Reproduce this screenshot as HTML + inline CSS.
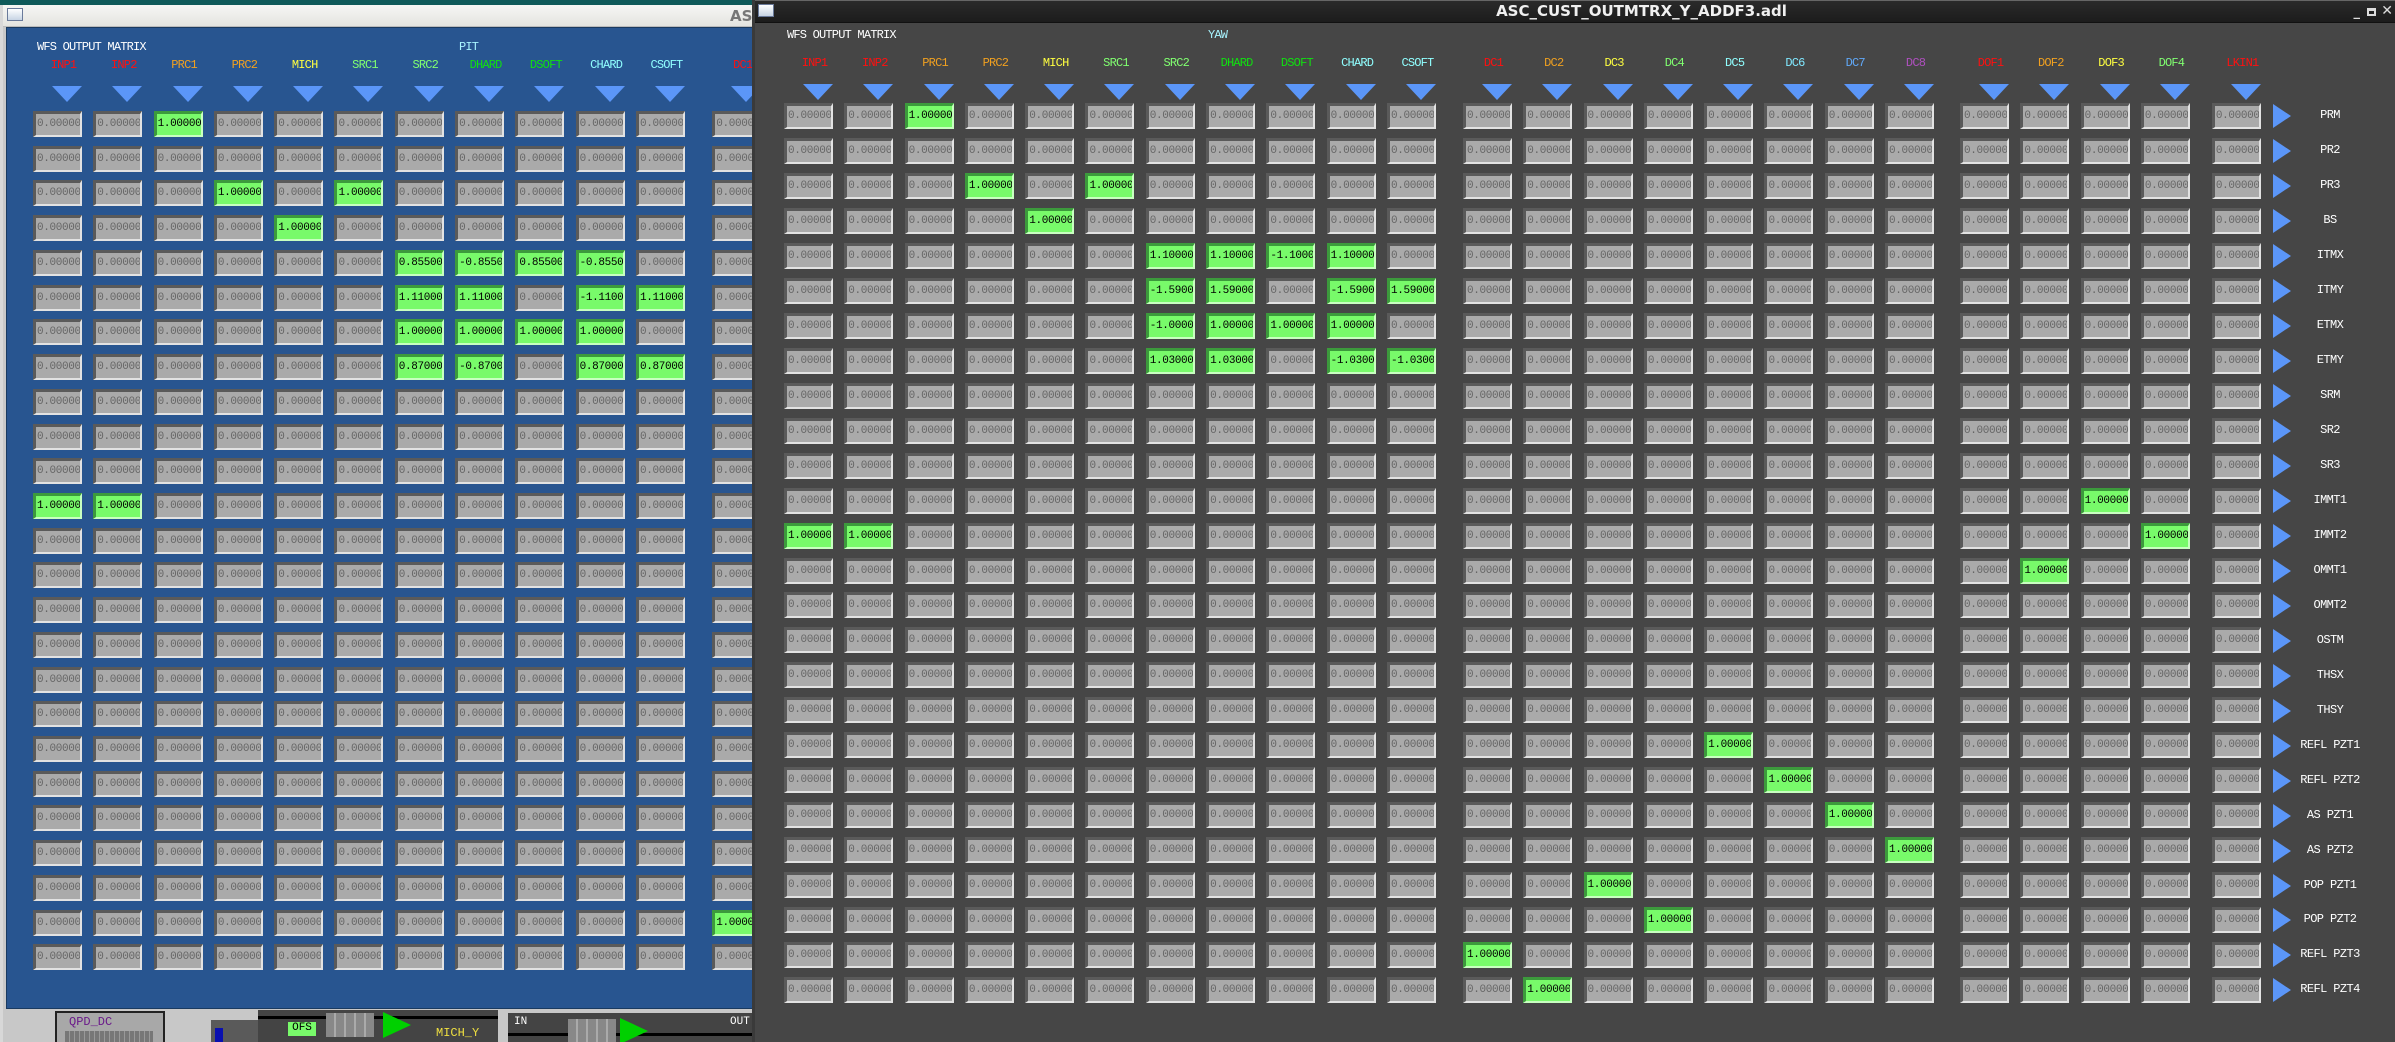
<!DOCTYPE html>
<html><head><meta charset="utf-8"><style>
*{margin:0;padding:0;box-sizing:border-box}
body{width:2395px;height:1042px;overflow:hidden;background:#0f5a5a;position:relative;font-family:"Liberation Mono",monospace}
#L{position:absolute;left:0;top:5px;width:756px;height:1037px;background:#c8c8c8;overflow:hidden;border-left:3px solid #d8d8d8}
#Lt{position:absolute;left:0;top:0;width:756px;height:22px;background:linear-gradient(#f6f6f4,#e4e4e0);border-bottom:1px solid #bbb}
#Lb{position:absolute;left:3px;top:22px;width:752px;height:982px;background:#285590;border:1px solid #1a3a60}
#Rw{position:absolute;left:752px;top:0;width:1643px;height:1042px;background:#464646;border-left:3px solid #3a3a3a}
#Rt{position:absolute;left:0;top:0;width:1643px;height:23px;background:linear-gradient(#2a2a2a,#1c1c1c);border-top:1px solid #666;border-bottom:1px solid #111}
.ic{position:absolute;width:16px;height:13px;background:linear-gradient(#fff,#c8d4e4);border:1px solid #6a7a9a}
.R{position:absolute;display:flex}
.R i,.R b{display:block;width:49px;height:26px;margin-right:11.3px;font-style:normal;font-weight:normal;font-size:11px;letter-spacing:-0.35px;line-height:21px;padding-left:1px;border-top:3px solid #5a5a5a;border-left:3px solid #5a5a5a;border-bottom:2px solid #e2e2e2;border-right:2px solid #e2e2e2;background:#aaa;color:#666;white-space:nowrap;overflow:hidden}
.R b{background:#78fa6a;color:#000;border-top-color:#3c9a3c;border-left-color:#3c9a3c;border-bottom-color:#c8ffc0;border-right-color:#c8ffc0}
.RR>:nth-child(12){margin-left:15.7px}.RR>:nth-child(20){margin-left:14.7px}.RR>:nth-child(24){margin-left:10.7px}
.LR>:nth-child(12){margin-left:16px}
.R u{display:block;width:49px;margin-right:11.3px;text-decoration:none;font-size:12px;letter-spacing:-0.8px;text-align:center;padding-left:12px;white-space:nowrap}
.R u s{display:block;width:0;height:0;border-left:15px solid transparent;border-right:15px solid transparent;border-top:16px solid #5b96f8;margin:14px 0 0 7px}
.t{position:absolute;font-size:12px;letter-spacing:-0.8px;color:#fff;white-space:nowrap}
.ar{position:absolute;left:2273px;width:0;height:0;border-top:12px solid transparent;border-bottom:12px solid transparent;border-left:18px solid #5b96f8}
.lb{position:absolute;left:2280px;width:100px;text-align:center;color:#fff;font-size:12px;letter-spacing:-0.6px}
.r{color:#ff1010}.o{color:#f0a020}.y{color:#ffff40}.lg{color:#80ff70}.g{color:#10e010}.c{color:#90ffff}.c2{color:#80e8ff}.bl{color:#60a8f8}.p{color:#b050c0}
</style></head><body>
<div id="L">
<div id="Lt"><div class="ic" style="left:4px;top:3px"></div><div style="position:absolute;left:727px;top:2px;font:bold 15px 'DejaVu Sans',sans-serif;color:#777">AS</div></div>
<div id="Lb">
<div class="t" style="left:30px;top:12px">WFS OUTPUT MATRIX</div>
<div class="t" style="left:452px;top:12px;color:#a8f4ff">PIT</div>
<div class="R LR" style="left:26px;top:30px">
<u class="r">INP1<s></s></u><u class="r">INP2<s></s></u><u class="o">PRC1<s></s></u><u class="o">PRC2<s></s></u><u class="y">MICH<s></s></u><u class="lg">SRC1<s></s></u><u class="lg">SRC2<s></s></u><u class="g">DHARD<s></s></u><u class="g">DSOFT<s></s></u><u class="c">CHARD<s></s></u><u class="c">CSOFT<s></s></u><u class="r" style="margin-left:16px">DC1<s></s></u></div>
<div class="R LR" style="left:26px;top:83px"><i>0.00000</i><i>0.00000</i><b>1.00000</b><i>0.00000</i><i>0.00000</i><i>0.00000</i><i>0.00000</i><i>0.00000</i><i>0.00000</i><i>0.00000</i><i>0.00000</i><i>0.00000</i></div>
<div class="R LR" style="left:26px;top:117.7px"><i>0.00000</i><i>0.00000</i><i>0.00000</i><i>0.00000</i><i>0.00000</i><i>0.00000</i><i>0.00000</i><i>0.00000</i><i>0.00000</i><i>0.00000</i><i>0.00000</i><i>0.00000</i></div>
<div class="R LR" style="left:26px;top:152.4px"><i>0.00000</i><i>0.00000</i><i>0.00000</i><b>1.00000</b><i>0.00000</i><b>1.00000</b><i>0.00000</i><i>0.00000</i><i>0.00000</i><i>0.00000</i><i>0.00000</i><i>0.00000</i></div>
<div class="R LR" style="left:26px;top:187.2px"><i>0.00000</i><i>0.00000</i><i>0.00000</i><i>0.00000</i><b>1.00000</b><i>0.00000</i><i>0.00000</i><i>0.00000</i><i>0.00000</i><i>0.00000</i><i>0.00000</i><i>0.00000</i></div>
<div class="R LR" style="left:26px;top:221.9px"><i>0.00000</i><i>0.00000</i><i>0.00000</i><i>0.00000</i><i>0.00000</i><i>0.00000</i><b>0.85500</b><b>-0.8550</b><b>0.85500</b><b>-0.8550</b><i>0.00000</i><i>0.00000</i></div>
<div class="R LR" style="left:26px;top:256.6px"><i>0.00000</i><i>0.00000</i><i>0.00000</i><i>0.00000</i><i>0.00000</i><i>0.00000</i><b>1.11000</b><b>1.11000</b><i>0.00000</i><b>-1.1100</b><b>1.11000</b><i>0.00000</i></div>
<div class="R LR" style="left:26px;top:291.3px"><i>0.00000</i><i>0.00000</i><i>0.00000</i><i>0.00000</i><i>0.00000</i><i>0.00000</i><b>1.00000</b><b>1.00000</b><b>1.00000</b><b>1.00000</b><i>0.00000</i><i>0.00000</i></div>
<div class="R LR" style="left:26px;top:326px"><i>0.00000</i><i>0.00000</i><i>0.00000</i><i>0.00000</i><i>0.00000</i><i>0.00000</i><b>0.87000</b><b>-0.8700</b><i>0.00000</i><b>0.87000</b><b>0.87000</b><i>0.00000</i></div>
<div class="R LR" style="left:26px;top:360.8px"><i>0.00000</i><i>0.00000</i><i>0.00000</i><i>0.00000</i><i>0.00000</i><i>0.00000</i><i>0.00000</i><i>0.00000</i><i>0.00000</i><i>0.00000</i><i>0.00000</i><i>0.00000</i></div>
<div class="R LR" style="left:26px;top:395.5px"><i>0.00000</i><i>0.00000</i><i>0.00000</i><i>0.00000</i><i>0.00000</i><i>0.00000</i><i>0.00000</i><i>0.00000</i><i>0.00000</i><i>0.00000</i><i>0.00000</i><i>0.00000</i></div>
<div class="R LR" style="left:26px;top:430.2px"><i>0.00000</i><i>0.00000</i><i>0.00000</i><i>0.00000</i><i>0.00000</i><i>0.00000</i><i>0.00000</i><i>0.00000</i><i>0.00000</i><i>0.00000</i><i>0.00000</i><i>0.00000</i></div>
<div class="R LR" style="left:26px;top:464.9px"><b>1.00000</b><b>1.00000</b><i>0.00000</i><i>0.00000</i><i>0.00000</i><i>0.00000</i><i>0.00000</i><i>0.00000</i><i>0.00000</i><i>0.00000</i><i>0.00000</i><i>0.00000</i></div>
<div class="R LR" style="left:26px;top:499.6px"><i>0.00000</i><i>0.00000</i><i>0.00000</i><i>0.00000</i><i>0.00000</i><i>0.00000</i><i>0.00000</i><i>0.00000</i><i>0.00000</i><i>0.00000</i><i>0.00000</i><i>0.00000</i></div>
<div class="R LR" style="left:26px;top:534.4px"><i>0.00000</i><i>0.00000</i><i>0.00000</i><i>0.00000</i><i>0.00000</i><i>0.00000</i><i>0.00000</i><i>0.00000</i><i>0.00000</i><i>0.00000</i><i>0.00000</i><i>0.00000</i></div>
<div class="R LR" style="left:26px;top:569.1px"><i>0.00000</i><i>0.00000</i><i>0.00000</i><i>0.00000</i><i>0.00000</i><i>0.00000</i><i>0.00000</i><i>0.00000</i><i>0.00000</i><i>0.00000</i><i>0.00000</i><i>0.00000</i></div>
<div class="R LR" style="left:26px;top:603.8px"><i>0.00000</i><i>0.00000</i><i>0.00000</i><i>0.00000</i><i>0.00000</i><i>0.00000</i><i>0.00000</i><i>0.00000</i><i>0.00000</i><i>0.00000</i><i>0.00000</i><i>0.00000</i></div>
<div class="R LR" style="left:26px;top:638.5px"><i>0.00000</i><i>0.00000</i><i>0.00000</i><i>0.00000</i><i>0.00000</i><i>0.00000</i><i>0.00000</i><i>0.00000</i><i>0.00000</i><i>0.00000</i><i>0.00000</i><i>0.00000</i></div>
<div class="R LR" style="left:26px;top:673.2px"><i>0.00000</i><i>0.00000</i><i>0.00000</i><i>0.00000</i><i>0.00000</i><i>0.00000</i><i>0.00000</i><i>0.00000</i><i>0.00000</i><i>0.00000</i><i>0.00000</i><i>0.00000</i></div>
<div class="R LR" style="left:26px;top:708px"><i>0.00000</i><i>0.00000</i><i>0.00000</i><i>0.00000</i><i>0.00000</i><i>0.00000</i><i>0.00000</i><i>0.00000</i><i>0.00000</i><i>0.00000</i><i>0.00000</i><i>0.00000</i></div>
<div class="R LR" style="left:26px;top:742.7px"><i>0.00000</i><i>0.00000</i><i>0.00000</i><i>0.00000</i><i>0.00000</i><i>0.00000</i><i>0.00000</i><i>0.00000</i><i>0.00000</i><i>0.00000</i><i>0.00000</i><i>0.00000</i></div>
<div class="R LR" style="left:26px;top:777.4px"><i>0.00000</i><i>0.00000</i><i>0.00000</i><i>0.00000</i><i>0.00000</i><i>0.00000</i><i>0.00000</i><i>0.00000</i><i>0.00000</i><i>0.00000</i><i>0.00000</i><i>0.00000</i></div>
<div class="R LR" style="left:26px;top:812.1px"><i>0.00000</i><i>0.00000</i><i>0.00000</i><i>0.00000</i><i>0.00000</i><i>0.00000</i><i>0.00000</i><i>0.00000</i><i>0.00000</i><i>0.00000</i><i>0.00000</i><i>0.00000</i></div>
<div class="R LR" style="left:26px;top:846.8px"><i>0.00000</i><i>0.00000</i><i>0.00000</i><i>0.00000</i><i>0.00000</i><i>0.00000</i><i>0.00000</i><i>0.00000</i><i>0.00000</i><i>0.00000</i><i>0.00000</i><i>0.00000</i></div>
<div class="R LR" style="left:26px;top:881.6px"><i>0.00000</i><i>0.00000</i><i>0.00000</i><i>0.00000</i><i>0.00000</i><i>0.00000</i><i>0.00000</i><i>0.00000</i><i>0.00000</i><i>0.00000</i><i>0.00000</i><b>1.00000</b></div>
<div class="R LR" style="left:26px;top:916.3px"><i>0.00000</i><i>0.00000</i><i>0.00000</i><i>0.00000</i><i>0.00000</i><i>0.00000</i><i>0.00000</i><i>0.00000</i><i>0.00000</i><i>0.00000</i><i>0.00000</i><i>0.00000</i></div>
</div>
<div style="position:absolute;left:52px;top:1006px;width:110px;height:40px;background:#a8a8a8;border:2px solid #222"><div style="position:absolute;left:12px;top:2px;color:#6a1a8a;font-size:12px">QPD_DC</div><div style="position:absolute;left:8px;top:18px;width:88px;height:20px;background:repeating-linear-gradient(90deg,#777 0 4px,#999 4px 5px)"></div></div>
<div style="position:absolute;left:208px;top:1015px;width:50px;height:30px;background:#5a5a5a"></div>
<div style="position:absolute;left:212px;top:1023px;width:8px;height:25px;background:#0a10b0"></div>
<div style="position:absolute;left:255px;top:1005px;width:240px;height:40px;background:#444"><div style="position:absolute;left:0;top:6px;width:240px;height:3px;background:#000"></div><div style="position:absolute;left:30px;top:12px;width:28px;height:14px;background:#78fa6a;font-size:11px;color:#000;text-align:center">OFS</div><div style="position:absolute;left:68px;top:3px;width:48px;height:24px;background:repeating-linear-gradient(90deg,#888 0 8px,#aaa 8px 10px)"></div><div style="position:absolute;left:125px;top:2px;width:0;height:0;border-top:13px solid transparent;border-bottom:13px solid transparent;border-left:28px solid #00d000"></div><div style="position:absolute;left:178px;top:16px;color:#f0e040;font-size:12px">MICH_Y</div></div>
<div style="position:absolute;left:495px;top:1005px;width:10px;height:40px;background:#c8c8c8"></div>
<div style="position:absolute;left:505px;top:1008px;width:250px;height:40px;background:#444"><div style="position:absolute;left:6px;top:3px;color:#fff;font-size:11px">IN</div><div style="position:absolute;left:222px;top:3px;color:#fff;font-size:11px">OUT</div><div style="position:absolute;left:0;top:20px;width:250px;height:3px;background:#000"></div><div style="position:absolute;left:60px;top:6px;width:48px;height:30px;background:repeating-linear-gradient(90deg,#888 0 8px,#aaa 8px 10px)"></div><div style="position:absolute;left:112px;top:5px;width:0;height:0;border-top:13px solid transparent;border-bottom:13px solid transparent;border-left:28px solid #00d000"></div></div>
</div>

<div id="Rw">
<div id="Rt"><div class="ic" style="left:3px;top:3px"></div><div style="position:absolute;left:0;width:1643px;top:1px;text-align:center;font:bold 15px 'DejaVu Sans',sans-serif;color:#f0f0f0;padding-left:130px">ASC_CUST_OUTMTRX_Y_ADDF3.adl</div><div style="position:absolute;right:38px;top:4px;color:#ddd;font:bold 13px 'DejaVu Sans',sans-serif">_</div><div style="position:absolute;right:22px;top:7px;width:9px;height:8px;border:2px solid #ddd;border-top-width:3px"></div><div style="position:absolute;right:5px;top:2px;color:#ddd;font:bold 14px 'DejaVu Sans',sans-serif">✕</div></div>
</div>
<div class="t" style="left:787px;top:28px">WFS OUTPUT MATRIX</div>
<div class="t" style="left:1208px;top:28px;color:#a8f4ff">YAW</div>
<div class="R RR" style="left:784px;top:56px">
<u class="r">INP1<s></s></u><u class="r">INP2<s></s></u><u class="o">PRC1<s></s></u><u class="o">PRC2<s></s></u><u class="y">MICH<s></s></u><u class="lg">SRC1<s></s></u><u class="lg">SRC2<s></s></u><u class="g">DHARD<s></s></u><u class="g">DSOFT<s></s></u><u class="c">CHARD<s></s></u><u class="c">CSOFT<s></s></u><u class="r">DC1<s></s></u><u class="o">DC2<s></s></u><u class="y">DC3<s></s></u><u class="lg">DC4<s></s></u><u class="c">DC5<s></s></u><u class="c2">DC6<s></s></u><u class="bl">DC7<s></s></u><u class="p">DC8<s></s></u><u class="r">DOF1<s></s></u><u class="o">DOF2<s></s></u><u class="y">DOF3<s></s></u><u class="lg">DOF4<s></s></u><u class="r">LKIN1<s></s></u></div>
<div class="R RR" style="left:784px;top:103px"><i>0.00000</i><i>0.00000</i><b>1.00000</b><i>0.00000</i><i>0.00000</i><i>0.00000</i><i>0.00000</i><i>0.00000</i><i>0.00000</i><i>0.00000</i><i>0.00000</i><i>0.00000</i><i>0.00000</i><i>0.00000</i><i>0.00000</i><i>0.00000</i><i>0.00000</i><i>0.00000</i><i>0.00000</i><i>0.00000</i><i>0.00000</i><i>0.00000</i><i>0.00000</i><i>0.00000</i></div>
<div class="R RR" style="left:784px;top:138px"><i>0.00000</i><i>0.00000</i><i>0.00000</i><i>0.00000</i><i>0.00000</i><i>0.00000</i><i>0.00000</i><i>0.00000</i><i>0.00000</i><i>0.00000</i><i>0.00000</i><i>0.00000</i><i>0.00000</i><i>0.00000</i><i>0.00000</i><i>0.00000</i><i>0.00000</i><i>0.00000</i><i>0.00000</i><i>0.00000</i><i>0.00000</i><i>0.00000</i><i>0.00000</i><i>0.00000</i></div>
<div class="R RR" style="left:784px;top:172.9px"><i>0.00000</i><i>0.00000</i><i>0.00000</i><b>1.00000</b><i>0.00000</i><b>1.00000</b><i>0.00000</i><i>0.00000</i><i>0.00000</i><i>0.00000</i><i>0.00000</i><i>0.00000</i><i>0.00000</i><i>0.00000</i><i>0.00000</i><i>0.00000</i><i>0.00000</i><i>0.00000</i><i>0.00000</i><i>0.00000</i><i>0.00000</i><i>0.00000</i><i>0.00000</i><i>0.00000</i></div>
<div class="R RR" style="left:784px;top:207.9px"><i>0.00000</i><i>0.00000</i><i>0.00000</i><i>0.00000</i><b>1.00000</b><i>0.00000</i><i>0.00000</i><i>0.00000</i><i>0.00000</i><i>0.00000</i><i>0.00000</i><i>0.00000</i><i>0.00000</i><i>0.00000</i><i>0.00000</i><i>0.00000</i><i>0.00000</i><i>0.00000</i><i>0.00000</i><i>0.00000</i><i>0.00000</i><i>0.00000</i><i>0.00000</i><i>0.00000</i></div>
<div class="R RR" style="left:784px;top:242.8px"><i>0.00000</i><i>0.00000</i><i>0.00000</i><i>0.00000</i><i>0.00000</i><i>0.00000</i><b>1.10000</b><b>1.10000</b><b>-1.1000</b><b>1.10000</b><i>0.00000</i><i>0.00000</i><i>0.00000</i><i>0.00000</i><i>0.00000</i><i>0.00000</i><i>0.00000</i><i>0.00000</i><i>0.00000</i><i>0.00000</i><i>0.00000</i><i>0.00000</i><i>0.00000</i><i>0.00000</i></div>
<div class="R RR" style="left:784px;top:277.8px"><i>0.00000</i><i>0.00000</i><i>0.00000</i><i>0.00000</i><i>0.00000</i><i>0.00000</i><b>-1.5900</b><b>1.59000</b><i>0.00000</i><b>-1.5900</b><b>1.59000</b><i>0.00000</i><i>0.00000</i><i>0.00000</i><i>0.00000</i><i>0.00000</i><i>0.00000</i><i>0.00000</i><i>0.00000</i><i>0.00000</i><i>0.00000</i><i>0.00000</i><i>0.00000</i><i>0.00000</i></div>
<div class="R RR" style="left:784px;top:312.8px"><i>0.00000</i><i>0.00000</i><i>0.00000</i><i>0.00000</i><i>0.00000</i><i>0.00000</i><b>-1.0000</b><b>1.00000</b><b>1.00000</b><b>1.00000</b><i>0.00000</i><i>0.00000</i><i>0.00000</i><i>0.00000</i><i>0.00000</i><i>0.00000</i><i>0.00000</i><i>0.00000</i><i>0.00000</i><i>0.00000</i><i>0.00000</i><i>0.00000</i><i>0.00000</i><i>0.00000</i></div>
<div class="R RR" style="left:784px;top:347.7px"><i>0.00000</i><i>0.00000</i><i>0.00000</i><i>0.00000</i><i>0.00000</i><i>0.00000</i><b>1.03000</b><b>1.03000</b><i>0.00000</i><b>-1.0300</b><b>-1.0300</b><i>0.00000</i><i>0.00000</i><i>0.00000</i><i>0.00000</i><i>0.00000</i><i>0.00000</i><i>0.00000</i><i>0.00000</i><i>0.00000</i><i>0.00000</i><i>0.00000</i><i>0.00000</i><i>0.00000</i></div>
<div class="R RR" style="left:784px;top:382.7px"><i>0.00000</i><i>0.00000</i><i>0.00000</i><i>0.00000</i><i>0.00000</i><i>0.00000</i><i>0.00000</i><i>0.00000</i><i>0.00000</i><i>0.00000</i><i>0.00000</i><i>0.00000</i><i>0.00000</i><i>0.00000</i><i>0.00000</i><i>0.00000</i><i>0.00000</i><i>0.00000</i><i>0.00000</i><i>0.00000</i><i>0.00000</i><i>0.00000</i><i>0.00000</i><i>0.00000</i></div>
<div class="R RR" style="left:784px;top:417.6px"><i>0.00000</i><i>0.00000</i><i>0.00000</i><i>0.00000</i><i>0.00000</i><i>0.00000</i><i>0.00000</i><i>0.00000</i><i>0.00000</i><i>0.00000</i><i>0.00000</i><i>0.00000</i><i>0.00000</i><i>0.00000</i><i>0.00000</i><i>0.00000</i><i>0.00000</i><i>0.00000</i><i>0.00000</i><i>0.00000</i><i>0.00000</i><i>0.00000</i><i>0.00000</i><i>0.00000</i></div>
<div class="R RR" style="left:784px;top:452.6px"><i>0.00000</i><i>0.00000</i><i>0.00000</i><i>0.00000</i><i>0.00000</i><i>0.00000</i><i>0.00000</i><i>0.00000</i><i>0.00000</i><i>0.00000</i><i>0.00000</i><i>0.00000</i><i>0.00000</i><i>0.00000</i><i>0.00000</i><i>0.00000</i><i>0.00000</i><i>0.00000</i><i>0.00000</i><i>0.00000</i><i>0.00000</i><i>0.00000</i><i>0.00000</i><i>0.00000</i></div>
<div class="R RR" style="left:784px;top:487.6px"><i>0.00000</i><i>0.00000</i><i>0.00000</i><i>0.00000</i><i>0.00000</i><i>0.00000</i><i>0.00000</i><i>0.00000</i><i>0.00000</i><i>0.00000</i><i>0.00000</i><i>0.00000</i><i>0.00000</i><i>0.00000</i><i>0.00000</i><i>0.00000</i><i>0.00000</i><i>0.00000</i><i>0.00000</i><i>0.00000</i><i>0.00000</i><b>1.00000</b><i>0.00000</i><i>0.00000</i></div>
<div class="R RR" style="left:784px;top:522.5px"><b>1.00000</b><b>1.00000</b><i>0.00000</i><i>0.00000</i><i>0.00000</i><i>0.00000</i><i>0.00000</i><i>0.00000</i><i>0.00000</i><i>0.00000</i><i>0.00000</i><i>0.00000</i><i>0.00000</i><i>0.00000</i><i>0.00000</i><i>0.00000</i><i>0.00000</i><i>0.00000</i><i>0.00000</i><i>0.00000</i><i>0.00000</i><i>0.00000</i><b>1.00000</b><i>0.00000</i></div>
<div class="R RR" style="left:784px;top:557.5px"><i>0.00000</i><i>0.00000</i><i>0.00000</i><i>0.00000</i><i>0.00000</i><i>0.00000</i><i>0.00000</i><i>0.00000</i><i>0.00000</i><i>0.00000</i><i>0.00000</i><i>0.00000</i><i>0.00000</i><i>0.00000</i><i>0.00000</i><i>0.00000</i><i>0.00000</i><i>0.00000</i><i>0.00000</i><i>0.00000</i><b>1.00000</b><i>0.00000</i><i>0.00000</i><i>0.00000</i></div>
<div class="R RR" style="left:784px;top:592.4px"><i>0.00000</i><i>0.00000</i><i>0.00000</i><i>0.00000</i><i>0.00000</i><i>0.00000</i><i>0.00000</i><i>0.00000</i><i>0.00000</i><i>0.00000</i><i>0.00000</i><i>0.00000</i><i>0.00000</i><i>0.00000</i><i>0.00000</i><i>0.00000</i><i>0.00000</i><i>0.00000</i><i>0.00000</i><i>0.00000</i><i>0.00000</i><i>0.00000</i><i>0.00000</i><i>0.00000</i></div>
<div class="R RR" style="left:784px;top:627.4px"><i>0.00000</i><i>0.00000</i><i>0.00000</i><i>0.00000</i><i>0.00000</i><i>0.00000</i><i>0.00000</i><i>0.00000</i><i>0.00000</i><i>0.00000</i><i>0.00000</i><i>0.00000</i><i>0.00000</i><i>0.00000</i><i>0.00000</i><i>0.00000</i><i>0.00000</i><i>0.00000</i><i>0.00000</i><i>0.00000</i><i>0.00000</i><i>0.00000</i><i>0.00000</i><i>0.00000</i></div>
<div class="R RR" style="left:784px;top:662.4px"><i>0.00000</i><i>0.00000</i><i>0.00000</i><i>0.00000</i><i>0.00000</i><i>0.00000</i><i>0.00000</i><i>0.00000</i><i>0.00000</i><i>0.00000</i><i>0.00000</i><i>0.00000</i><i>0.00000</i><i>0.00000</i><i>0.00000</i><i>0.00000</i><i>0.00000</i><i>0.00000</i><i>0.00000</i><i>0.00000</i><i>0.00000</i><i>0.00000</i><i>0.00000</i><i>0.00000</i></div>
<div class="R RR" style="left:784px;top:697.3px"><i>0.00000</i><i>0.00000</i><i>0.00000</i><i>0.00000</i><i>0.00000</i><i>0.00000</i><i>0.00000</i><i>0.00000</i><i>0.00000</i><i>0.00000</i><i>0.00000</i><i>0.00000</i><i>0.00000</i><i>0.00000</i><i>0.00000</i><i>0.00000</i><i>0.00000</i><i>0.00000</i><i>0.00000</i><i>0.00000</i><i>0.00000</i><i>0.00000</i><i>0.00000</i><i>0.00000</i></div>
<div class="R RR" style="left:784px;top:732.3px"><i>0.00000</i><i>0.00000</i><i>0.00000</i><i>0.00000</i><i>0.00000</i><i>0.00000</i><i>0.00000</i><i>0.00000</i><i>0.00000</i><i>0.00000</i><i>0.00000</i><i>0.00000</i><i>0.00000</i><i>0.00000</i><i>0.00000</i><b>1.00000</b><i>0.00000</i><i>0.00000</i><i>0.00000</i><i>0.00000</i><i>0.00000</i><i>0.00000</i><i>0.00000</i><i>0.00000</i></div>
<div class="R RR" style="left:784px;top:767.2px"><i>0.00000</i><i>0.00000</i><i>0.00000</i><i>0.00000</i><i>0.00000</i><i>0.00000</i><i>0.00000</i><i>0.00000</i><i>0.00000</i><i>0.00000</i><i>0.00000</i><i>0.00000</i><i>0.00000</i><i>0.00000</i><i>0.00000</i><i>0.00000</i><b>1.00000</b><i>0.00000</i><i>0.00000</i><i>0.00000</i><i>0.00000</i><i>0.00000</i><i>0.00000</i><i>0.00000</i></div>
<div class="R RR" style="left:784px;top:802.2px"><i>0.00000</i><i>0.00000</i><i>0.00000</i><i>0.00000</i><i>0.00000</i><i>0.00000</i><i>0.00000</i><i>0.00000</i><i>0.00000</i><i>0.00000</i><i>0.00000</i><i>0.00000</i><i>0.00000</i><i>0.00000</i><i>0.00000</i><i>0.00000</i><i>0.00000</i><b>1.00000</b><i>0.00000</i><i>0.00000</i><i>0.00000</i><i>0.00000</i><i>0.00000</i><i>0.00000</i></div>
<div class="R RR" style="left:784px;top:837.2px"><i>0.00000</i><i>0.00000</i><i>0.00000</i><i>0.00000</i><i>0.00000</i><i>0.00000</i><i>0.00000</i><i>0.00000</i><i>0.00000</i><i>0.00000</i><i>0.00000</i><i>0.00000</i><i>0.00000</i><i>0.00000</i><i>0.00000</i><i>0.00000</i><i>0.00000</i><i>0.00000</i><b>1.00000</b><i>0.00000</i><i>0.00000</i><i>0.00000</i><i>0.00000</i><i>0.00000</i></div>
<div class="R RR" style="left:784px;top:872.1px"><i>0.00000</i><i>0.00000</i><i>0.00000</i><i>0.00000</i><i>0.00000</i><i>0.00000</i><i>0.00000</i><i>0.00000</i><i>0.00000</i><i>0.00000</i><i>0.00000</i><i>0.00000</i><i>0.00000</i><b>1.00000</b><i>0.00000</i><i>0.00000</i><i>0.00000</i><i>0.00000</i><i>0.00000</i><i>0.00000</i><i>0.00000</i><i>0.00000</i><i>0.00000</i><i>0.00000</i></div>
<div class="R RR" style="left:784px;top:907.1px"><i>0.00000</i><i>0.00000</i><i>0.00000</i><i>0.00000</i><i>0.00000</i><i>0.00000</i><i>0.00000</i><i>0.00000</i><i>0.00000</i><i>0.00000</i><i>0.00000</i><i>0.00000</i><i>0.00000</i><i>0.00000</i><b>1.00000</b><i>0.00000</i><i>0.00000</i><i>0.00000</i><i>0.00000</i><i>0.00000</i><i>0.00000</i><i>0.00000</i><i>0.00000</i><i>0.00000</i></div>
<div class="R RR" style="left:784px;top:942px"><i>0.00000</i><i>0.00000</i><i>0.00000</i><i>0.00000</i><i>0.00000</i><i>0.00000</i><i>0.00000</i><i>0.00000</i><i>0.00000</i><i>0.00000</i><i>0.00000</i><b>1.00000</b><i>0.00000</i><i>0.00000</i><i>0.00000</i><i>0.00000</i><i>0.00000</i><i>0.00000</i><i>0.00000</i><i>0.00000</i><i>0.00000</i><i>0.00000</i><i>0.00000</i><i>0.00000</i></div>
<div class="R RR" style="left:784px;top:977px"><i>0.00000</i><i>0.00000</i><i>0.00000</i><i>0.00000</i><i>0.00000</i><i>0.00000</i><i>0.00000</i><i>0.00000</i><i>0.00000</i><i>0.00000</i><i>0.00000</i><i>0.00000</i><b>1.00000</b><i>0.00000</i><i>0.00000</i><i>0.00000</i><i>0.00000</i><i>0.00000</i><i>0.00000</i><i>0.00000</i><i>0.00000</i><i>0.00000</i><i>0.00000</i><i>0.00000</i></div>

<div class="ar" style="top:104px"></div><div class="lb" style="top:108px">PRM</div>
<div class="ar" style="top:139px"></div><div class="lb" style="top:143px">PR2</div>
<div class="ar" style="top:174px"></div><div class="lb" style="top:178px">PR3</div>
<div class="ar" style="top:209px"></div><div class="lb" style="top:213px">BS</div>
<div class="ar" style="top:244px"></div><div class="lb" style="top:248px">ITMX</div>
<div class="ar" style="top:279px"></div><div class="lb" style="top:283px">ITMY</div>
<div class="ar" style="top:314px"></div><div class="lb" style="top:318px">ETMX</div>
<div class="ar" style="top:349px"></div><div class="lb" style="top:353px">ETMY</div>
<div class="ar" style="top:384px"></div><div class="lb" style="top:388px">SRM</div>
<div class="ar" style="top:419px"></div><div class="lb" style="top:423px">SR2</div>
<div class="ar" style="top:454px"></div><div class="lb" style="top:458px">SR3</div>
<div class="ar" style="top:489px"></div><div class="lb" style="top:493px">IMMT1</div>
<div class="ar" style="top:524px"></div><div class="lb" style="top:528px">IMMT2</div>
<div class="ar" style="top:559px"></div><div class="lb" style="top:563px">OMMT1</div>
<div class="ar" style="top:594px"></div><div class="lb" style="top:598px">OMMT2</div>
<div class="ar" style="top:629px"></div><div class="lb" style="top:633px">OSTM</div>
<div class="ar" style="top:664px"></div><div class="lb" style="top:668px">THSX</div>
<div class="ar" style="top:699px"></div><div class="lb" style="top:703px">THSY</div>
<div class="ar" style="top:734px"></div><div class="lb" style="top:738px">REFL PZT1</div>
<div class="ar" style="top:769px"></div><div class="lb" style="top:773px">REFL PZT2</div>
<div class="ar" style="top:804px"></div><div class="lb" style="top:808px">AS PZT1</div>
<div class="ar" style="top:839px"></div><div class="lb" style="top:843px">AS PZT2</div>
<div class="ar" style="top:874px"></div><div class="lb" style="top:878px">POP PZT1</div>
<div class="ar" style="top:908px"></div><div class="lb" style="top:912px">POP PZT2</div>
<div class="ar" style="top:943px"></div><div class="lb" style="top:947px">REFL PZT3</div>
<div class="ar" style="top:978px"></div><div class="lb" style="top:982px">REFL PZT4</div>
</body></html>
